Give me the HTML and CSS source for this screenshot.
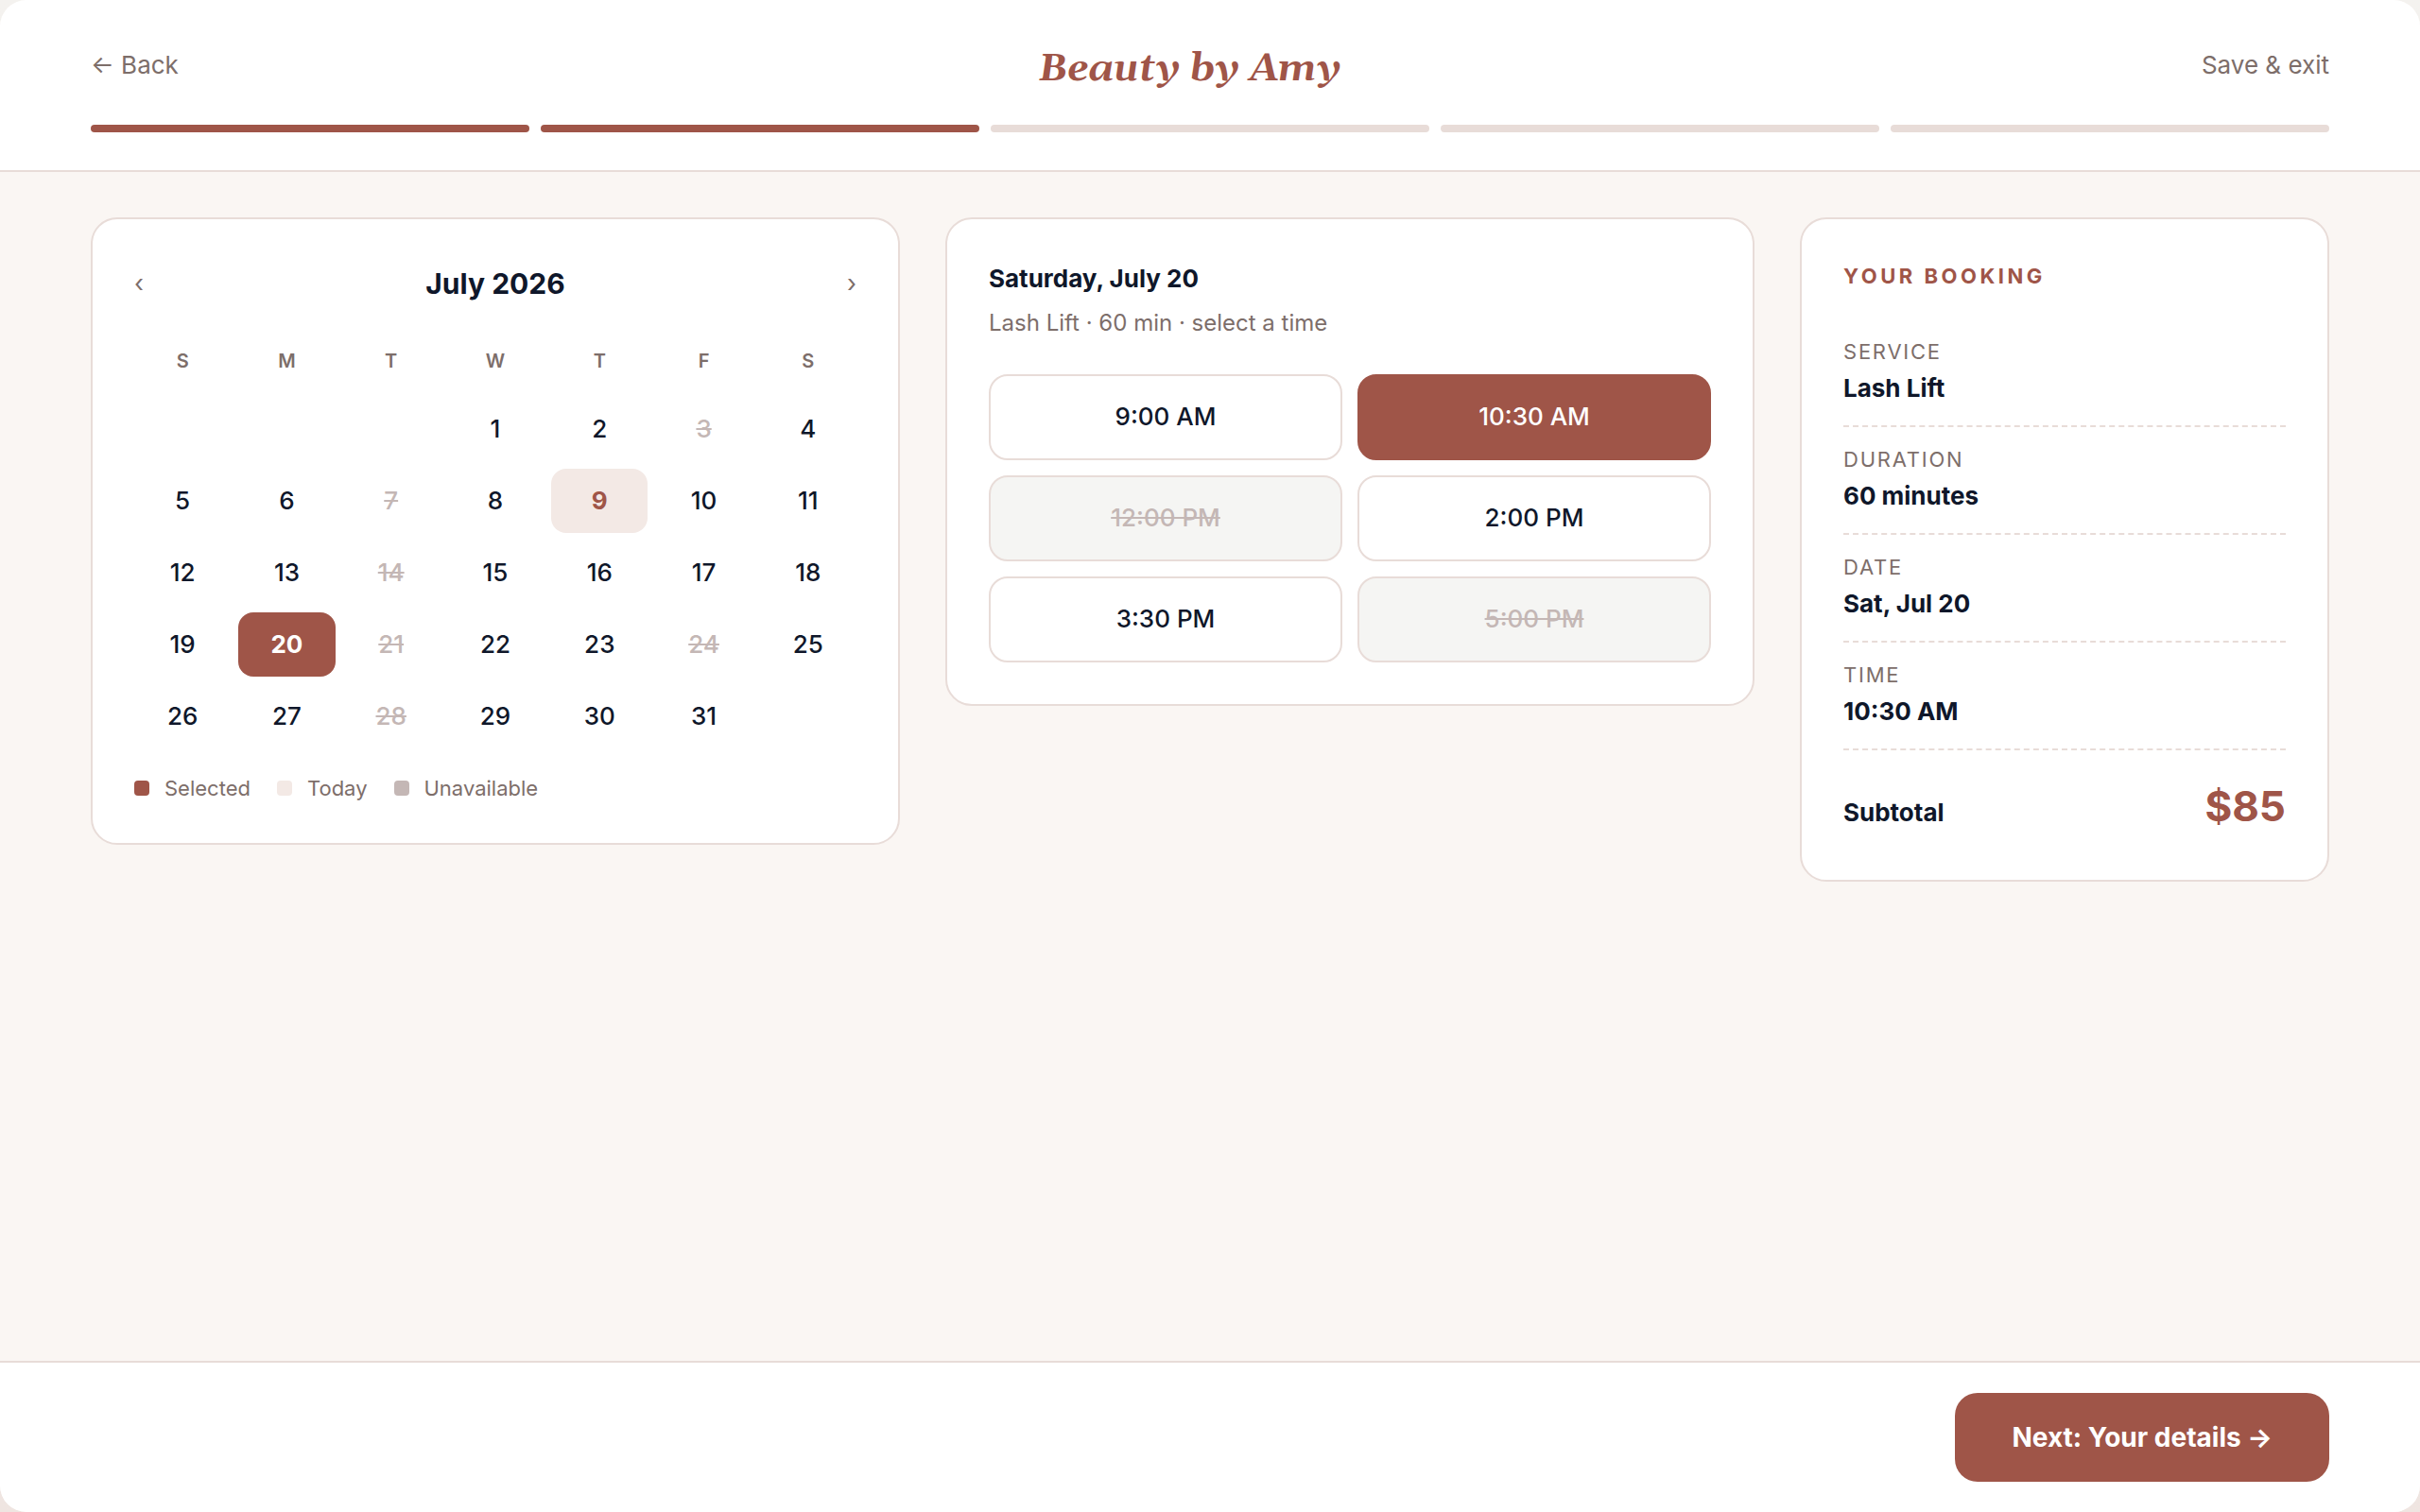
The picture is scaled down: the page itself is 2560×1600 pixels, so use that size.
FILE: index.html
```
<!DOCTYPE html>
<html lang="en">
<head>
    <meta charset="UTF-8">
    <meta name="viewport" content="width=device-width, initial-scale=1.0">
    <title>Beauty by Amy | Booking</title>
    <link rel="stylesheet" href="styles.css">
</head>
<body>

    <div class="app">

        <header class="header">
            <div class="header-row">
                <a href="#" class="header-link">← Back</a>
                <div class="brand">Beauty by Amy</div>
                <a href="#" class="header-link">Save &amp; exit</a>
            </div>
            <div class="progress">
                <span class="step done"></span>
                <span class="step done"></span>
                <span class="step"></span>
                <span class="step"></span>
                <span class="step"></span>
            </div>
        </header>

        <main class="content">

            <!-- Calendar -->
            <section class="card">
                <div class="calendar-nav">
                    <button type="button" aria-label="Previous month">‹</button>
                    <h2>July 2026</h2>
                    <button type="button" aria-label="Next month">›</button>
                </div>

                <div class="calendar-grid">
                    <span class="weekday">S</span>
                    <span class="weekday">M</span>
                    <span class="weekday">T</span>
                    <span class="weekday">W</span>
                    <span class="weekday">T</span>
                    <span class="weekday">F</span>
                    <span class="weekday">S</span>

                    <button type="button" class="day first">1</button>
                    <button type="button" class="day">2</button>
                    <button type="button" class="day" disabled>3</button>
                    <button type="button" class="day">4</button>
                    <button type="button" class="day">5</button>
                    <button type="button" class="day">6</button>
                    <button type="button" class="day" disabled>7</button>
                    <button type="button" class="day">8</button>
                    <button type="button" class="day today">9</button>
                    <button type="button" class="day">10</button>
                    <button type="button" class="day">11</button>
                    <button type="button" class="day">12</button>
                    <button type="button" class="day">13</button>
                    <button type="button" class="day" disabled>14</button>
                    <button type="button" class="day">15</button>
                    <button type="button" class="day">16</button>
                    <button type="button" class="day">17</button>
                    <button type="button" class="day">18</button>
                    <button type="button" class="day">19</button>
                    <button type="button" class="day selected">20</button>
                    <button type="button" class="day" disabled>21</button>
                    <button type="button" class="day">22</button>
                    <button type="button" class="day">23</button>
                    <button type="button" class="day" disabled>24</button>
                    <button type="button" class="day">25</button>
                    <button type="button" class="day">26</button>
                    <button type="button" class="day">27</button>
                    <button type="button" class="day" disabled>28</button>
                    <button type="button" class="day">29</button>
                    <button type="button" class="day">30</button>
                    <button type="button" class="day">31</button>
                </div>

                <div class="legend">
                    <span class="legend-item"><i class="swatch swatch-selected"></i>Selected</span>
                    <span class="legend-item"><i class="swatch swatch-today"></i>Today</span>
                    <span class="legend-item"><i class="swatch swatch-off"></i>Unavailable</span>
                </div>
            </section>

            <!-- Time slots -->
            <section class="card">
                <h3 class="slots-title">Saturday, July 20</h3>
                <p class="slots-sub">Lash Lift · 60 min · select a time</p>
                <div class="slots">
                    <button type="button" class="slot">9:00 AM</button>
                    <button type="button" class="slot selected">10:30 AM</button>
                    <button type="button" class="slot" disabled>12:00 PM</button>
                    <button type="button" class="slot">2:00 PM</button>
                    <button type="button" class="slot">3:30 PM</button>
                    <button type="button" class="slot" disabled>5:00 PM</button>
                </div>
            </section>

            <!-- Summary -->
            <aside class="card">
                <h4 class="summary-title">Your booking</h4>
                <dl class="summary">
                    <div class="summary-row">
                        <dt>Service</dt>
                        <dd>Lash Lift</dd>
                    </div>
                    <div class="summary-row">
                        <dt>Duration</dt>
                        <dd>60 minutes</dd>
                    </div>
                    <div class="summary-row">
                        <dt>Date</dt>
                        <dd>Sat, Jul 20</dd>
                    </div>
                    <div class="summary-row">
                        <dt>Time</dt>
                        <dd>10:30 AM</dd>
                    </div>
                </dl>
                <div class="total">
                    <span>Subtotal</span>
                    <strong>$85</strong>
                </div>
            </aside>

        </main>

        <footer class="footer">
            <button type="button" class="next">Next: Your details →</button>
        </footer>

    </div>

</body>
</html>
```
FILE: styles.css
```
:root {
    --brand: #9f5548;
    --ink: #0f172a;
    --muted: #7d6e6a;
    --line: #e8dcd8;
    --blush: #f3e9e5;
    --off: #c4b7b5;
    --page: #faf6f3;
}

* {
    margin: 0;
    padding: 0;
    box-sizing: border-box;
}

body {
    font-family: Inter, "Liberation Sans", sans-serif;
    font-size: 26px;
    color: var(--ink);
    background: linear-gradient(#f4f2ef, #efe5e1);
}

button {
    font: inherit;
    color: inherit;
    background: none;
    border: none;
    cursor: pointer;
}

.app {
    min-height: 100vh;
    display: flex;
    flex-direction: column;
    background: var(--page);
    border-radius: 28px;
    overflow: hidden;
}

/* Header */
.header {
    background: #fff;
    padding: 44px 96px 40px;
    border-bottom: 2px solid var(--line);
}

.header-row {
    display: flex;
    justify-content: space-between;
    align-items: center;
    line-height: 50px;
}

.header-link {
    color: var(--muted);
    text-decoration: none;
}

.brand {
    padding-top: 10px;
    font-family: Georgia, Gelasio, "Noto Serif", serif;
    font-size: 40px;
    font-weight: 700;
    font-style: italic;
    line-height: 40px;
    color: var(--brand);
}

.progress {
    display: flex;
    gap: 12px;
    margin-top: 38px;
}

.step {
    flex: 1;
    height: 8px;
    border-radius: 4px;
    background: var(--line);
}

.step.done {
    background: var(--brand);
}

/* Columns */
.content {
    flex: 1;
    display: grid;
    grid-template-columns: 1fr 1fr 560px;
    gap: 48px;
    align-items: start;
    padding: 48px 96px;
}

.card {
    background: #fff;
    border: 2px solid var(--line);
    border-radius: 28px;
    padding: 44px;
}

/* Calendar */
.calendar-nav {
    display: flex;
    justify-content: space-between;
    align-items: center;
    line-height: 48px;
    margin-bottom: 28px;
}

.calendar-nav h2 {
    font-size: 30px;
    font-weight: 700;
}

.calendar-nav button {
    color: var(--muted);
}

.calendar-grid {
    display: grid;
    grid-template-columns: repeat(7, 1fr);
    gap: 8px;
    text-align: center;
}

.weekday {
    padding: 12px 0;
    font-size: 20px;
    line-height: 36px;
    font-weight: 600;
    color: var(--muted);
}

.day {
    padding-bottom: 2px;
    height: 68px;
    border-radius: 16px;
    font-weight: 500;
}

.day.first {
    grid-column: 4;
}

.day:disabled {
    color: var(--off);
    text-decoration: line-through;
    cursor: default;
}

.day.today {
    background: var(--blush);
    color: var(--brand);
    font-weight: 700;
}

.day.selected {
    background: var(--brand);
    color: #fff;
    font-weight: 700;
}

.legend {
    display: flex;
    gap: 28px;
    margin-top: 28px;
    font-size: 22px;
    line-height: 28px;
    color: var(--muted);
}

.legend-item {
    display: flex;
    align-items: center;
    gap: 16px;
}

.swatch {
    width: 16px;
    height: 16px;
    border-radius: 4px;
}

.swatch-selected {
    background: var(--brand);
}

.swatch-today {
    background: var(--blush);
}

.swatch-off {
    background: var(--off);
}

/* Time slots */
.slots-title {
    font-size: 26px;
    line-height: 38px;
    font-weight: 700;
}

.slots-sub {
    margin-top: 10px;
    font-size: 24px;
    line-height: 36px;
    color: var(--muted);
}

.slots {
    display: grid;
    grid-template-columns: 1fr 1fr;
    gap: 16px;
    margin-top: 36px;
}

.slot {
    padding: 27px 0 28px;
    border: 2px solid var(--line);
    border-radius: 20px;
    line-height: 32px;
    font-weight: 500;
}

.slot.selected {
    background: var(--brand);
    border-color: var(--brand);
    color: #fff;
}

.slot:disabled {
    background: #f5f5f3;
    color: var(--off);
    text-decoration: line-through;
    cursor: default;
}

/* Summary */
.summary-title {
    margin-bottom: 30px;
    font-size: 22px;
    line-height: 32px;
    font-weight: 700;
    letter-spacing: 0.16em;
    text-transform: uppercase;
    color: var(--brand);
}

.summary-row {
    padding: 20px 0;
    border-bottom: 2px dashed var(--line);
}

.summary-row dt {
    margin-bottom: 6px;
    font-size: 22px;
    line-height: 28px;
    letter-spacing: 0.08em;
    text-transform: uppercase;
    color: var(--muted);
}

.summary-row dd {
    line-height: 38px;
    font-weight: 700;
}

.total {
    display: flex;
    justify-content: space-between;
    align-items: baseline;
    margin-top: 32px;
    line-height: 54px;
    font-weight: 700;
}

.total strong {
    font-size: 44px;
    font-weight: 700;
    color: var(--brand);
}

/* Footer */
.footer {
    display: flex;
    justify-content: flex-end;
    padding: 32px 96px;
    background: #fff;
    border-top: 2px solid var(--line);
}

.next {
    padding: 28px 60px;
    border-radius: 24px;
    background: var(--brand);
    color: #fff;
    font-size: 28px;
    line-height: 38px;
    font-weight: 700;
}
```
